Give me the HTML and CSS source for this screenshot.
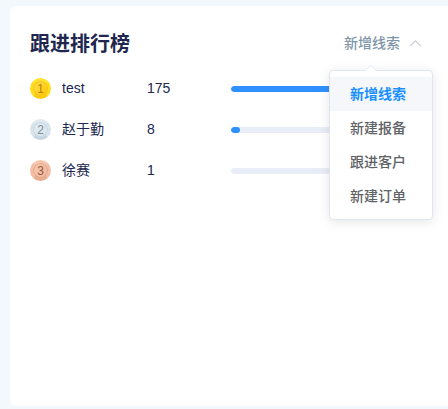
FILE: index.html
```html
<!DOCTYPE html>
<html lang="zh-CN">
<head>
<meta charset="utf-8">
<meta name="viewport" content="width=device-width, initial-scale=1">
<title>跟进排行榜</title>
<link rel="stylesheet" href="styles.css">
</head>
<body>
<main class="card">
  <header class="card-header">
    <h1 class="title">跟进排行榜</h1>
    <div class="dropdown">
      <button class="trigger" type="button" aria-haspopup="true" aria-expanded="true">
        <span>新增线索</span>
        <svg class="chevron" viewBox="0 0 12 12" aria-hidden="true"><path d="M1 8.5 6 3.5 11 8.5"/></svg>
      </button>
      <div class="menu">
        <svg class="arrow" viewBox="0 0 12 7" aria-hidden="true"><path class="arrow-fill" d="M0 7 5 1.6Q6 .6 7 1.6L12 7Z"/><path class="arrow-line" d="M0 6 5 1.2Q6 .3 7 1.2L12 6"/></svg>
        <button class="option selected" type="button">新增线索</button>
        <button class="option" type="button">新建报备</button>
        <button class="option" type="button">跟进客户</button>
        <button class="option" type="button">新建订单</button>
      </div>
    </div>
  </header>
  <ol class="ranking">
    <li class="row">
      <span class="medal gold">1</span>
      <span class="name">test</span>
      <span class="count">175</span>
      <span class="track"><span class="bar" style="width: 100%"></span></span>
    </li>
    <li class="row">
      <span class="medal silver">2</span>
      <span class="name">赵于勤</span>
      <span class="count">8</span>
      <span class="track"><span class="bar" style="width: 4.57%"></span></span>
    </li>
    <li class="row">
      <span class="medal bronze">3</span>
      <span class="name">徐赛</span>
      <span class="count">1</span>
      <span class="track"><span class="bar" style="width: 0%"></span></span>
    </li>
  </ol>
</main>
</body>
</html>
```
FILE: styles.css
```css
* {
  box-sizing: border-box;
}

body {
  margin: 0;
  padding: 6px 0 3px 10px;
  background: #f3f8fc;
  color: #20264f;
  font: 14px/20px "Liberation Sans", "Noto Sans CJK SC", sans-serif;
}

button {
  border: 0;
  background: none;
  font: inherit;
  cursor: pointer;
}

.card {
  min-height: calc(100vh - 9px);
  padding: 21px 21px 20px 20px;
  border-radius: 6px 0 0 6px;
  background: #fff;
}

.card-header {
  display: flex;
  align-items: center;
  justify-content: space-between;
}

.title {
  margin: 0;
  padding-top: 2px;
  font-size: 20px;
  line-height: 30px;
  font-weight: 700;
}

.dropdown {
  position: relative;
  padding-right: 5px;
}

.trigger {
  display: flex;
  align-items: center;
  gap: 9px;
  padding: 0;
  color: #8095a8;
  font-weight: 500;
}

.chevron {
  width: 13px;
  height: 13px;
  fill: none;
  stroke: #c8ccd4;
  stroke-width: 1;
}

.menu {
  position: absolute;
  z-index: 1;
  top: 37px;
  right: -6px;
  width: 104px;
  padding: 6px 0;
  border: 1px solid #e0e6ef;
  border-radius: 4px;
  background: #fff;
  box-shadow: 0 2px 12px rgba(0, 0, 0, 0.1);
}

.arrow {
  position: absolute;
  top: -6px;
  left: 35px;
  width: 12px;
  height: 7px;
}

.arrow-fill {
  fill: #fff;
}

.arrow-line {
  fill: none;
  stroke: #e8edf4;
  stroke-width: 1;
}

.option {
  display: block;
  width: 100%;
  padding: 0 20px;
  color: #606266;
  line-height: 34px;
  text-align: left;
  font-weight: 500;
}

.selected {
  background: #f5f7fb;
  color: #1890ff;
  font-weight: 700;
}

.ranking {
  display: grid;
  gap: 20px;
  margin: 19px 0 0;
  padding: 0;
  list-style: none;
}

.row {
  display: grid;
  grid-template-columns: 22px 75px 74px 1fr;
  column-gap: 10px;
  align-items: center;
  height: 21px;
}

.name,
.count {
  align-self: start;
}

.medal {
  width: 21px;
  height: 21px;
  border: 3px solid;
  border-radius: 50%;
  font-size: 12px;
  line-height: 16px;
  text-align: center;
}

.gold {
  border-color: #ffe32e #ffdc1c #fbcb10;
  background: linear-gradient(135deg, #ffdf50, #fac800);
  box-shadow: inset 0 0 0 1px #f6c416;
  color: #c17a08;
}

.silver {
  border-color: #dfe9f0 #d8e4ec #c6d5df;
  background: linear-gradient(135deg, #e4edf3, #d6e4ec);
  box-shadow: inset 0 0 0 1px #c6d6e0;
  color: #7f8b95;
}

.bronze {
  border-color: #f6c8b0 #f3bea4 #e6ac90;
  background: linear-gradient(135deg, #f6c9b2, #f0b89d);
  box-shadow: inset 0 0 0 1px #e2a88b;
  color: #95573e;
}

.track {
  height: 6px;
  overflow: hidden;
  border-radius: 3px;
  background: #e9edf7;
}

.bar {
  display: block;
  height: 100%;
  border-radius: 3px;
  background: #2f90ff;
}
```
